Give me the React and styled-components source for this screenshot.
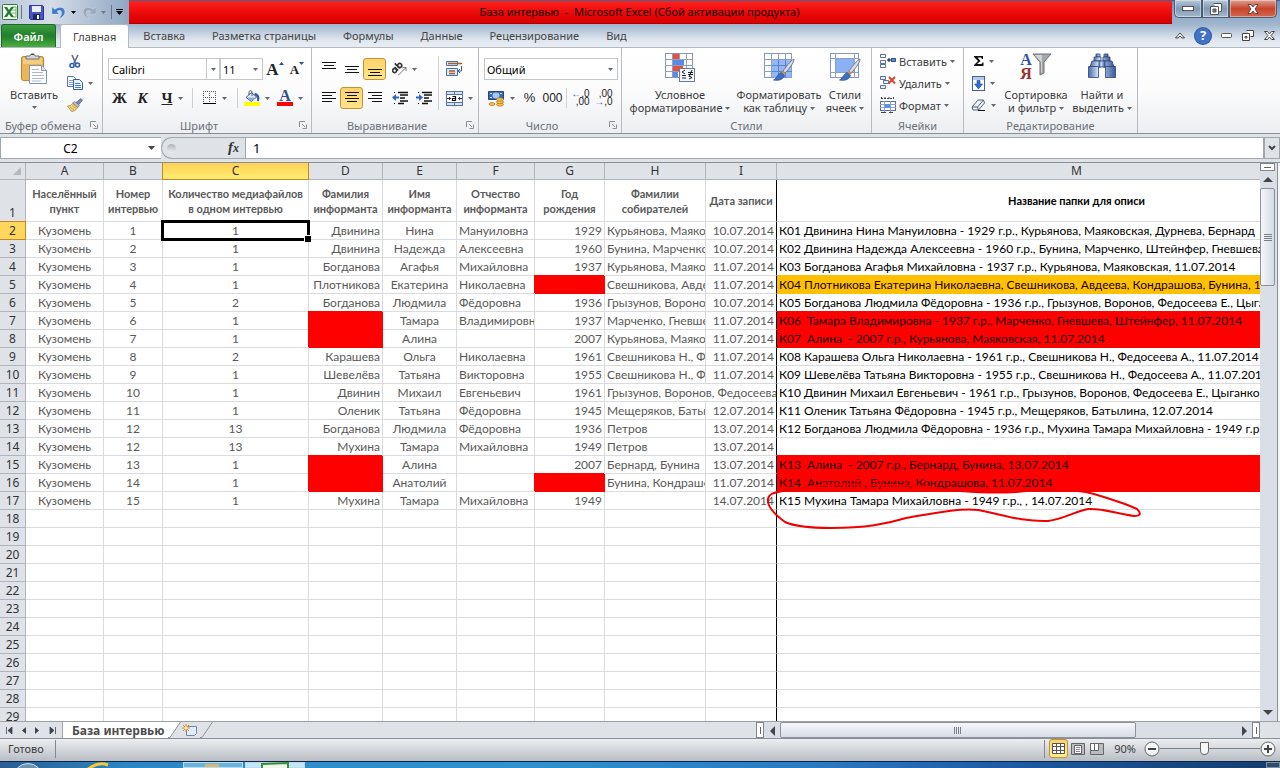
import React from "react";
import styled, { createGlobalStyle, css } from "styled-components";

const COLUMNS = [
  { id: "A", width: 78, align: "center", title: ["Населённый", "пункт"] },
  { id: "B", width: 59, align: "center", title: ["Номер", "интервью"] },
  { id: "C", width: 146, align: "center", title: ["Количество медиафайлов", "в одном интервью"] },
  { id: "D", width: 74, align: "right", title: ["Фамилия", "информанта"] },
  { id: "E", width: 74, align: "center", title: ["Имя", "информанта"] },
  { id: "F", width: 78, align: "left", title: ["Отчество", "информанта"] },
  { id: "G", width: 70, align: "right", title: ["Год", "рождения"] },
  { id: "H", width: 101, align: "left", title: ["Фамилии", "собирателей"] },
  { id: "I", width: 71, align: "right", title: ["Дата записи"] },
  { id: "M", width: 600, align: "left", title: ["Название папки для описи"] },
];

const RED = "#ff0000";
const ORANGE = "#ffc000";

const ROWS = [
  ["1", "1", "Двинина", "Нина", "Мануиловна", "1929", "Курьянова, Маяковская", "10.07.2014", "К01 Двинина Нина Мануиловна - 1929 г.р., Курьянова, Маяковская, Дурнева, Бернард"],
  ["2", "1", "Двинина", "Надежда", "Алексеевна", "1960", "Бунина, Марченко", "10.07.2014", "К02 Двинина Надежда Алексеевна - 1960 г.р., Бунина, Марченко, Штейнфер, Гневшева"],
  ["3", "1", "Богданова", "Агафья", "Михайловна", "1937", "Курьянова, Маяковская", "11.07.2014", "К03 Богданова Агафья Михайловна - 1937 г.р., Курьянова, Маяковская, 11.07.2014"],
  ["4", "1", "Плотникова", "Екатерина", "Николаевна", "", "Свешникова, Авдеева", "11.07.2014", "К04 Плотникова Екатерина Николаевна, Свешникова, Авдеева, Кондрашова, Бунина, 11.07.2014"],
  ["5", "2", "Богданова", "Людмила", "Фёдоровна", "1936", "Грызунов, Воронов", "10.07.2014", "К05 Богданова Людмила Фёдоровна - 1936 г.р., Грызунов, Воронов, Федосеева Е., Цыганков"],
  ["6", "1", "", "Тамара", "Владимировна", "1937", "Марченко, Гневшева", "11.07.2014", "К06  Тамара Владимировна - 1937 г.р., Марченко, Гневшева, Штейнфер, 11.07.2014"],
  ["7", "1", "", "Алина", "", "2007", "Курьянова, Маяковская", "11.07.2014", "К07  Алина  - 2007 г.р., Курьянова, Маяковская, 11.07.2014"],
  ["8", "2", "Карашева", "Ольга", "Николаевна", "1961", "Свешникова Н., Федосеева", "11.07.2014", "К08 Карашева Ольга Николаевна - 1961 г.р., Свешникова Н., Федосеева А., 11.07.2014"],
  ["9", "1", "Шевелёва", "Татьяна", "Викторовна", "1955", "Свешникова Н., Федосеева", "11.07.2014", "К09 Шевелёва Татьяна Викторовна - 1955 г.р., Свешникова Н., Федосеева А., 11.07.2014"],
  ["10", "1", "Двинин", "Михаил", "Евгеньевич", "1961", "Грызунов, Воронов, Федосеева", null, "К10 Двинин Михаил Евгеньевич - 1961 г.р., Грызунов, Воронов, Федосеева Е., Цыганков"],
  ["11", "1", "Оленик", "Татьяна", "Фёдоровна", "1945", "Мещеряков, Батылина", "12.07.2014", "К11 Оленик Татьяна Фёдоровна - 1945 г.р., Мещеряков, Батылина, 12.07.2014"],
  ["12", "13", "Богданова", "Людмила", "Фёдоровна", "1936", "Петров", "13.07.2014", "К12 Богданова Людмила Фёдоровна - 1936 г.р., Мухина Тамара Михайловна - 1949 г.р."],
  ["12", "13", "Мухина", "Тамара", "Михайловна", "1949", "Петров", "13.07.2014", ""],
  ["13", "1", "", "Алина", "", "2007", "Бернард, Бунина", "13.07.2014", "К13  Алина  - 2007 г.р., Бернард, Бунина, 13.07.2014"],
  ["14", "1", "", "Анатолий", "", "", "Бунина, Кондрашова", "11.07.2014", "К14  Анатолий , Бунина, Кондрашова, 11.07.2014"],
  ["15", "1", "Мухина", "Тамара", "Михайловна", "1949", "", "14.07.2014", "К15 Мухина Тамара Михайловна - 1949 г.р., , 14.07.2014"],
];

const FILLS = {
  G5: RED, M5: ORANGE, D7: RED, D8: RED, M7: RED, M8: RED,
  D15: RED, D16: RED, G16: RED, M15: RED, M16: RED,
};

const TABS = ["Вставка", "Разметка страницы", "Формулы", "Данные", "Рецензирование", "Вид"];
const EMPTY_ROWS = Array.from({ length: 12 }, (_, i) => i + 18);

/* ---------- icons ---------- */

const Svg = ({ w, h, children }) => (
  <svg width={w} height={h} viewBox={`0 0 ${w} ${h}`} fill="none" aria-hidden="true">
    {children}
  </svg>
);

const Caret = () => (
  <Svg w={5} h={3}>
    <path d="M0 0h5L2.5 3z" fill="#666" />
  </Svg>
);

const Lines = ({ rows, h = 14 }) => (
  <Svg w={14} h={h}>
    {rows.map(([x, y, w]) => (
      <path key={y} d={`M${x} ${y + 0.5}h${w}`} stroke="#111" />
    ))}
  </Svg>
);

const ExcelIcon = () => (
  <Svg w={16} h={16}>
    <rect x="0.5" y="0.5" width="15" height="15" rx="1" fill="#f6fbf4" stroke="#2c7a36" />
    <path d="M10 3h4v10h-4M10 6h4M10 9h4" stroke="#76b36e" />
    <path d="M2 3h3l2 3 2-3h3L8.500 8l3.500 5H9L7 10l-2 3H2l3.500-5z" fill="#1f7d30" />
  </Svg>
);

const SaveIcon = () => (
  <Svg w={15} h={15}>
    <path d="M.5.5h13l1 1v13H1.500l-1-1z" fill="#4a55c4" stroke="#2c3593" />
    <path d="M3 1h9v6H3z" fill="#e8eefb" />
    <path d="M4 9h7v6H4z" fill="#20285f" />
    <path d="M8 10h2v4H8z" fill="#fff" />
  </Svg>
);

const UndoIcon = ({ color = "#3f7ccb", flip }) => (
  <Svg w={14} h={13}>
    <g transform={flip ? "matrix(-1 0 0 1 14 0)" : undefined}>
      <path d="M0 1v7h7L4.800 5.600C7 3.700 9.500 4 9.700 6.500c.2 2.500-1 4-2.700 6 4-1.500 6-4 5.800-7C12.500 1 7 0 2.800 3.500z" fill={color} stroke="#fff" strokeOpacity=".4" strokeWidth=".5" />
    </g>
  </Svg>
);

const PasteIcon = () => (
  <Svg w={28} h={32}>
    <rect x="1.500" y="3.500" width="22" height="24" rx="2" fill="#ecb556" stroke="#b7832e" />
    <path d="M3 5h19v6H3z" fill="#f6cb7d" />
    <path d="M6 6V3h4c0-3 5-3 5 0h4v3z" fill="#d5d8de" stroke="#6b7078" />
    <path d="M11 1.500h3" stroke="#444" />
    <path d="M9.500 12.500h12l5 5v13h-17z" fill="#fff" stroke="#7f93b8" />
    <path d="M21.500 12.500v5h5" fill="#dfe7f5" stroke="#7f93b8" />
    <path d="M12 16.500h7M12 19.500h11M12 22.500h12M12 25.500h12M12 28h9" stroke="#a9b8d6" />
  </Svg>
);

const CutIcon = () => (
  <Svg w={12} h={15}>
    <path d="M3 1l4 9M9 1L4.500 10" stroke="#5e6b85" strokeWidth="1.600" />
    <circle cx="3" cy="11.500" r="2" stroke="#2d5fb3" strokeWidth="1.600" />
    <circle cx="8.500" cy="11" r="2" stroke="#2d5fb3" strokeWidth="1.600" />
  </Svg>
);

const CopyIcon = () => (
  <Svg w={16} h={14}>
    <path d="M.5.5h6l3 3v7h-9z" fill="#fff" stroke="#5476b4" />
    <path d="M2 4.500h5M2 6.500h4M2 8.500h4" stroke="#7fa0d4" />
    <path d="M6.500 3.500h6l3 3v7h-9z" fill="#e9f1fd" stroke="#3a5f9f" />
    <path d="M8 7.500h5M8 9.500h6M8 11.500h6" stroke="#4c7dc6" />
  </Svg>
);

const BrushIcon = () => (
  <Svg w={16} h={14}>
    <path d="M9 4.500L14 .5l1.500 1.500L12 6.500z" fill="#8088b4" stroke="#4d5689" strokeWidth=".7" />
    <path d="M7.500 3.500l5 4-1.500 2-5.500-4.500z" fill="#b8bcc6" stroke="#6b6f79" strokeWidth=".6" />
    <path d="M5.500 5.500l5 4C9 12 7 13.500 4.500 13.500L.5 8c2 .3 3.500-.8 5-2.500z" fill="#f1d67c" stroke="#a8843a" strokeWidth=".8" />
    <path d="M3 9l4 3M5 7.500l4 3" stroke="#b99545" strokeWidth=".7" />
  </Svg>
);

const BorderIcon = () => (
  <Svg w={14} h={14}>
    <path d="M.5 0v12M6.500 0v12M12.500 0v12M0 .5h13M0 6.500h13" stroke="#555" strokeDasharray="1 1" />
    <path d="M0 12.500h13" stroke="#000" />
  </Svg>
);

const BucketIcon = () => (
  <Svg w={16} h={16}>
    <path d="M7.500 2.500l5 4.500-5 4.500L2 7.500z" fill="#e6edf8" stroke="#4a6086" />
    <path d="M3 7.500h9l-4.500 3.500z" fill="#8eabd9" />
    <path d="M8 6V2.500c0-2.500-3-2.500-3 0V5" stroke="#43536e" />
    <path d="M11 3c4 .5 5 4 4 8-1.500.5-2 0-2-1 .5-3-.5-4-3-5z" fill="#2f5bad" />
    <path d="M0 12h16v4H0z" fill="#ffff00" />
  </Svg>
);

const OrientationIcon = () => (
  <Svg w={15} h={14}>
    <g transform="rotate(-45 7 7)" stroke="#333" strokeWidth="1.600">
      <circle cx="2.800" cy="5" r="2" />
      <path d="M5.300 2.500v5M8 0v7" />
      <circle cx="10" cy="5" r="2" />
    </g>
    <path d="M6 13.500l8-8M14 9V5.500h-3.500" stroke="#777" />
  </Svg>
);

const WrapIcon = () => (
  <Svg w={17} h={16}>
    <path d="M.5.500h11v4H.5zM.5 7.500h11v7H.5z" fill="#dce6f5" stroke="#4e6fa5" />
    <path d="M2 2.500h14M3 10h6M3 12.500h6" stroke="#a3612d" strokeWidth="1.400" />
    <path d="M15.500 5v5h-3M14 8l-2 2 2 2" stroke="#3a5b94" />
  </Svg>
);

const IndentIcon = ({ flip }) => (
  <Svg w={16} h={14}>
    <path d="M6 1.500h10M8 4h8M8 7h5M8 10h8M6 12.500h6" stroke="#111" strokeWidth="1.500" />
    <path d={flip ? "M0 5.500h3V3l4 3.500L3 10V7.500H0z" : "M7 5.500H4V3L0 6.500 4 10V7.500h3z"} fill="#2f67c9" />
    <path d="M2 1.500h2M2 12.500h2" stroke="#111" strokeDasharray="1 1" />
  </Svg>
);

const MergeIcon = () => (
  <Svg w={17} h={15}>
    <rect x=".5" y=".5" width="16" height="14" fill="#d5e1f4" stroke="#5774a8" />
    <path d="M0 3.500h17M0 11.500h17M8.500 0v3M8.500 12v3" stroke="#5774a8" />
    <path d="M1 4h15v7H1z" fill="#fff" />
    <path d="M1 7.500h4M12 7.500h4M3.500 6v3M13.500 6v3" stroke="#333" />
    <path d="M6.500 5.500h3v4h-3v-2h3" stroke="#111" strokeWidth="1.200" />
  </Svg>
);

const MoneyIcon = () => (
  <Svg w={17} h={17}>
    <path d="M.5 1.500h15v8H.5z" fill="#3c67b4" stroke="#20468a" />
    <ellipse cx="8" cy="5.500" rx="3.500" ry="3" fill="#a9c6f1" />
    <path d="M2 3.500h2M12 3.500h2M2 7.500h2" stroke="#cfe0fa" />
    <g fill="#f5c34f" stroke="#a7721a" strokeWidth=".7">
      <ellipse cx="4" cy="14" rx="3" ry="1.500" />
      <ellipse cx="12" cy="14.500" rx="3.500" ry="1.700" />
      <ellipse cx="12" cy="12" rx="3.500" ry="1.700" />
      <ellipse cx="12" cy="9.500" rx="3.500" ry="1.700" />
    </g>
  </Svg>
);

const TableGrid = () => (
  <>
    <rect x=".5" y=".5" width="27" height="24" fill="#fff" stroke="#8697b5" />
    <path d="M0 6.500h28M0 12.500h28M0 18.500h28M7.500 0v25M14.500 0v25M21.500 0v25" stroke="#8ba0c4" />
  </>
);

const StyleBrush = () => (
  <>
    <path d="M30 6c0 4-5 10-9 14l-2-2c3-4 7-10 11-12z" fill="#d7dbe2" stroke="#5c6470" strokeWidth=".8" />
    <path d="M19 18l3 2-2 2-3-2z" fill="#c79055" />
    <path d="M17 19.500l3.500 3C19 27 14 28 9.500 27c3-1 3-5 7.500-7.500z" fill="#3e70bf" stroke="#274f93" strokeWidth=".7" />
  </>
);

const CondIcon = () => (
  <Svg w={30} h={29}>
    <TableGrid />
    <path d="M8 1h6v5H8zM8 13h10v5H8z" fill="#ee4c3b" />
    <path d="M8 7h11v5H8zM8 19h5v5H8z" fill="#5b8ae6" />
    <rect x="14.500" y="15.500" width="15" height="13" fill="#f2f5fb" stroke="#6f7a8e" />
    <path d="M20 17l-3 2 3 2M17 22.500h4M17 25h4M23 19.500h5M23 21.500h5M27 17l-3 7M24 23l3 1.500-3 1.500" stroke="#222" />
  </Svg>
);

const FormatTableIcon = () => (
  <Svg w={31} h={29}>
    <TableGrid />
    <path d="M8 7h20v18H8z" fill="#7aa5f2" fillOpacity=".8" />
    <path d="M8 12.500h20M8 18.500h20M14.500 7v18M21.500 7v18" stroke="#5a84cc" />
    <StyleBrush />
  </Svg>
);

const CellStyleIcon = () => (
  <Svg w={31} h={29}>
    <rect x=".5" y=".5" width="28" height="24" fill="#fff" stroke="#8697b5" />
    <path d="M0 5.500h29M0 19.500h29M5.500 0v25M24.500 0v25" stroke="#8ba0c4" />
    <path d="M6 6h18v13H6z" fill="#8bb1f5" />
    <StyleBrush />
  </Svg>
);

const InsertCellIcon = () => (
  <Svg w={16} h={15}>
    <path d="M.5.500h5v3h-5zM.5 6.500h5v3h-5zM.5 10.500h5v3h-5z" fill="#fff" stroke="#5a6f96" />
    <path d="M11.500 4.500h4v3h-4z" fill="#5b92e8" stroke="#2a4c8d" />
    <path d="M7 6h4M9 4v4" stroke="#111" />
  </Svg>
);

const DeleteCellIcon = () => (
  <Svg w={16} h={14}>
    <path d="M.5.500h5v3h-5zM.5 9.500h5v3h-5zM3.500 4.500h5v3h-5z" fill="#e6edf9" stroke="#5a6f96" />
    <path d="M9 1l6 6.500M15 1L8.500 7.500" stroke="#e2412b" strokeWidth="2" />
  </Svg>
);

const FormatCellIcon = () => (
  <Svg w={16} h={16}>
    <path d="M1 1.500h13M1.500 0v3M13.500 0v3M5 0v2M9 0v2" stroke="#444" strokeDasharray="2 1" />
    <rect x=".5" y="4.500" width="15" height="9" fill="#fff" stroke="#5a6f96" />
    <path d="M0 7.500h16M0 10.500h16M4.500 4v11M10.500 4v11" stroke="#8ba0c4" />
    <path d="M5 7h5v4H5z" fill="#5b92e8" />
    <path d="M1 15.500h5M9 15.500h4" stroke="#444" />
  </Svg>
);

const SumIcon = () => (
  <Svg w={10} h={10}>
    <path d="M0 0h9v3H8L7 1.500H3.500L6.500 5 3 8h4.500L8.500 6.500H9.500V10H0V9l4-4-4-4z" fill="#111" />
  </Svg>
);

const FillIcon = () => (
  <Svg w={13} h={15}>
    <rect x=".5" y=".5" width="12" height="14" fill="#fff" stroke="#46629a" />
    <path d="M1 1h11v3H1z" fill="#b9c9e6" />
    <path d="M5 4.500h3V8h2.500l-4 5-4-5H5z" fill="#2f6bd6" stroke="#1f4a9c" strokeWidth=".6" />
  </Svg>
);

const EraserIcon = () => (
  <Svg w={15} h={12}>
    <path d="M1 8l6-7h5.500l1 3-6 7H2z" fill="#eef1f8" stroke="#56617c" />
    <path d="M1 8h5.500l6-7M6.500 8l1 3" stroke="#56617c" />
    <path d="M7 11.500h7" stroke="#111" />
  </Svg>
);

const FunnelIcon = () => (
  <Svg w={20} h={24}>
    <path d="M1 1h18l-7 8v11l-4 2V9z" fill="#a4a7ab" stroke="#6d7074" />
    <path d="M3 2h7v17l-1 1V9z" fill="#dcdde0" fillOpacity=".8" />
  </Svg>
);

const FindIcon = () => (
  <Svg w={28} h={26}>
    <defs>
      <linearGradient id="tube" x1="0" x2="1" y1="0" y2="0">
        <stop offset="0" stopColor="#4a6baa" />
        <stop offset=".35" stopColor="#d3e0f6" />
        <stop offset="1" stopColor="#3a5a9b" />
      </linearGradient>
    </defs>
    <g fill="url(#tube)" stroke="#2c4479" strokeWidth=".8">
      <path d="M8 1h4v3H8zM16 1h4v3h-4z" />
      <path d="M6 4h7v4H6zM15 4h7v4h-7z" />
      <path d="M4 8h9v6H2zM15 8h9l2 6H15z" />
      <path d="M11 8h6v6h-6z" />
      <path d="M.5 13.500h10v11H.5zM17.500 13.500h10v11h-10z" />
    </g>
  </Svg>
);

const LauncherIcon = () => (
  <Svg w={8} h={8}>
    <path d="M.5 6V.5H6M3 3l3 3M7.500 3.500v4h-4" stroke="#8b9097" />
  </Svg>
);

const NewSheetIcon = () => (
  <Svg w={16} h={13}>
    <path d="M4.500 2.500h10v7l-2 2h-8z" fill="#e4ecfb" stroke="#6f86b5" />
    <path d="M4 0v8M0 4h8M1 1l6 6M7 1L1 7" stroke="#d98e1b" />
    <circle cx="4" cy="4" r="1.500" fill="#fff3b0" />
  </Svg>
);

/* ---------- ribbon building blocks ---------- */

const Group = ({ label, width, launcher, children }) => (
  <RibbonGroup $width={width}>
    <GroupBody>{children}</GroupBody>
    <GroupFooter $launcher={launcher}>
      <span>{label}</span>
      {launcher && (
        <Launcher aria-label={label}>
          <LauncherIcon />
        </Launcher>
      )}
    </GroupFooter>
  </RibbonGroup>
);

const Big = ({ icon, lines, width }) => (
  <BigButton $width={width}>
    <BigIcon>{icon}</BigIcon>
    <span>{lines[0]}</span>
    <span>
      {lines[1]} <Caret />
    </span>
  </BigButton>
);

const Tool = ({ width = 23, active, label, caret, children }) => (
  <ToolButton $width={width} $active={active} aria-label={label}>
    {children}
    {caret && <Caret />}
  </ToolButton>
);

function Ribbon() {
  return (
    <RibbonBar>
      <Group label="Буфер обмена" width={103} launcher>
        <BigButton $width={64}>
          <BigIcon>
            <PasteIcon />
          </BigIcon>
          <span>Вставить</span>
          <PasteCaret><Caret /></PasteCaret>
        </BigButton>
        <ToolStack $width={32}>
          <Tool label="Вырезать" width={14}><CutIcon /></Tool>
          <Tool label="Копировать" width={24} caret><CopyIcon /></Tool>
          <Tool label="Формат по образцу" width={14}><BrushIcon /></Tool>
        </ToolStack>
      </Group>

      <Group label="Шрифт" width={209} launcher>
        <ToolRows>
          <ToolRow>
            <FontInput aria-label="Шрифт" defaultValue="Calibri" />
            <ComboButton aria-label="Список шрифтов"><Caret /></ComboButton>
            <SizeBox>
              <SizeInput aria-label="Размер шрифта" defaultValue="11" />
              <PlainCaret aria-label="Список размеров"><Caret /></PlainCaret>
            </SizeBox>
            <Tool label="Увеличить размер" width={24}><Serif $size={17}>A</Serif><Corner><Svg w={5} h={3}><path d="M0 3h5L2.500 0z" fill="#2a4f9a" /></Svg></Corner></Tool>
            <Tool label="Уменьшить размер" width={20}><Serif $size={13}>A</Serif><Corner><Svg w={5} h={3}><path d="M0 0h5L2.500 3z" fill="#2a4f9a" /></Svg></Corner></Tool>
          </ToolRow>
          <ToolRow>
            <Tool label="Полужирный"><Serif $size={15}>Ж</Serif></Tool>
            <Tool label="Курсив"><Serif $size={15} $italic>К</Serif></Tool>
            <Tool label="Подчёркнутый" width={36} caret><Serif $size={15} $underline>Ч</Serif></Tool>
            <Divider $height={20} />
            <Tool label="Границы" width={40} caret><BorderIcon /></Tool>
            <Divider $height={20} />
            <Tool label="Цвет заливки" width={34} caret><BucketIcon /></Tool>
            <Tool label="Цвет текста" width={32} caret><FontColor>A</FontColor></Tool>
          </ToolRow>
        </ToolRows>
      </Group>

      <Group label="Выравнивание" width={167} launcher>
        <ToolRows>
          <ToolRow>
            <Tool label="По верхнему краю"><Lines rows={[[0, 0, 14], [2, 3, 10], [0, 6, 14]]} /></Tool>
            <Tool label="Посередине"><Lines rows={[[0, 4, 14], [2, 7, 10], [0, 10, 14]]} /></Tool>
            <Tool label="По нижнему краю" active><Lines rows={[[0, 7, 14], [2, 10, 10], [0, 13, 14]]} /></Tool>
            <Tool label="Ориентация" width={36} caret><OrientationIcon /></Tool>
          </ToolRow>
          <ToolRow>
            <Tool label="По левому краю"><Lines rows={[[0, 1, 14], [0, 4, 10], [0, 7, 14], [0, 10, 10]]} /></Tool>
            <Tool label="По центру" active><Lines rows={[[0, 1, 14], [2, 4, 10], [0, 7, 14], [2, 10, 10]]} /></Tool>
            <Tool label="По правому краю"><Lines rows={[[0, 1, 14], [4, 4, 10], [0, 7, 14], [4, 10, 10]]} /></Tool>
            <Tool label="Уменьшить отступ" width={28}><IndentIcon /></Tool>
            <Tool label="Увеличить отступ" width={20}><IndentIcon flip /></Tool>
          </ToolRow>
        </ToolRows>
        <Divider $height={54} />
        <ToolRows $tight>
          <ToolRow><Tool label="Перенос текста" width={22}><WrapIcon /></Tool></ToolRow>
          <ToolRow><Tool label="Объединить" width={32} caret><MergeIcon /></Tool></ToolRow>
        </ToolRows>
      </Group>

      <Group label="Число" width={143} launcher>
        <ToolRows>
          <ToolRow>
            <FormatBox>
              <FormatSelect aria-label="Числовой формат" defaultValue="Общий">
                <option>Общий</option>
              </FormatSelect>
              <Caret />
            </FormatBox>
          </ToolRow>
          <ToolRow>
            <Tool label="Финансовый формат" width={34} caret><MoneyIcon /></Tool>
            <Tool label="Процентный формат"><Digits $size={13}>%</Digits></Tool>
            <Tool label="Формат с разделителями"><Digits $size={12} $narrow>000</Digits></Tool>
            <Divider $height={20} />
            <Tool label="Увеличить разрядность"><Digits $size={10} $narrow><b>←</b>,0<br />,00</Digits></Tool>
            <Tool label="Уменьшить разрядность"><Digits $size={10} $narrow>,00<br /><b>→</b>,0</Digits></Tool>
          </ToolRow>
        </ToolRows>
      </Group>

      <Group label="Стили" width={250}>
        <Big icon={<CondIcon />} lines={["Условное", "форматирование"]} width={112} />
        <Big icon={<FormatTableIcon />} lines={["Форматировать", "как таблицу"]} width={86} />
        <Big icon={<CellStyleIcon />} lines={["Стили", "ячеек"]} width={46} />
      </Group>

      <Group label="Ячейки" width={92}>
        <ToolStack $width={84}>
          <CellButton><InsertCellIcon />Вставить <Caret /></CellButton>
          <CellButton><DeleteCellIcon />Удалить <Caret /></CellButton>
          <CellButton><FormatCellIcon />Формат <Caret /></CellButton>
        </ToolStack>
      </Group>

      <Group label="Редактирование" width={174}>
        <ToolStack $width={36}>
          <Tool label="Сумма" width={32} caret><SumIcon /></Tool>
          <Tool label="Заполнить" width={30} caret><FillIcon /></Tool>
          <Tool label="Очистить" width={30} caret><EraserIcon /></Tool>
        </ToolStack>
        <Big icon={<SortArt><SortLetters><i>А</i><b>Я</b></SortLetters><FunnelIcon /></SortArt>} lines={["Сортировка", "и фильтр"]} width={68} />
        <Big icon={<FindIcon />} lines={["Найти и", "выделить"]} width={64} />
      </Group>
    </RibbonBar>
  );
}

/* ---------- worksheet ---------- */

function DataRow({ cells, number }) {
  const values = ["Кузомень", ...cells];
  return (
    <tr>
      <RowHead scope="row" $active={number === 2}>{number}</RowHead>
      {COLUMNS.map((col, i) => {
        const value = values[i];
        if (value === null) return null;
        const spills = values[i + 1] === null;
        return (
          <Cell
            key={col.id}
            colSpan={spills ? 2 : 1}
            $align={col.align}
            $dark={col.id === "M"}
            $frozen={col.id === "I" || spills}
            $fill={FILLS[col.id + number]}
            $selected={col.id === "C" && number === 2}
          >
            {value}
          </Cell>
        );
      })}
    </tr>
  );
}

function Sheet() {
  return (
    <SheetArea>
      <SheetView>
        <Table>
          <colgroup>
            <col style={{ width: 26 }} />
            {COLUMNS.map((c) => (
              <col key={c.id} style={{ width: c.width }} />
            ))}
          </colgroup>
          <thead>
            <tr>
              <SelectAll aria-label="Выделить всё">
                <Svg w={8} h={8}>
                  <path d="M8 0v8H0z" fill="#b5bac0" />
                </Svg>
              </SelectAll>
              {COLUMNS.map((c) => (
                <ColHead key={c.id} scope="col" $active={c.id === "C"}>{c.id}</ColHead>
              ))}
            </tr>
          </thead>
          <tbody>
            <tr>
              <RowHead scope="row" $tall>1</RowHead>
              {COLUMNS.map((c) => (
                <TitleCell key={c.id} $dark={c.id === "M"} $frozen={c.id === "I"}>
                  {c.title.map((line) => (
                    <div key={line}>{line}</div>
                  ))}
                </TitleCell>
              ))}
            </tr>
            {ROWS.map((cells, i) => (
              <DataRow key={i} cells={cells} number={i + 2} />
            ))}
            {EMPTY_ROWS.map((n) => (
              <tr key={n}>
                <RowHead scope="row">{n}</RowHead>
                {COLUMNS.map((c) => (
                  <Cell key={c.id} $frozen={c.id === "I"} />
                ))}
              </tr>
            ))}
          </tbody>
        </Table>
        <Scribble width="384" height="44" viewBox="0 0 384 44" fill="none" aria-hidden="true">
          <path
            d="M12 7C40 1 70-2 100 0C140-1 165 2 195 6C220 8 235 8 250 7C280 4 310 4 328 9C348 15 358 18 371 24C376 29 374 31 368 31C350 29 338 23 322 24C310 26 298 34 282 36C255 37 235 29 212 25C190 23 165 29 140 33C120 39 100 43 65 43C45 43 28 41 19 37C8 29 1 21 2 14C3 9 7 8 12 7"
            stroke="#f00000"
            strokeWidth="2"
          />
        </Scribble>
      </SheetView>
      <VScroll>
        <SplitHandle aria-label="Разделить окно"><i /></SplitHandle>
        <ScrollButton aria-label="Вверх">
          <Svg w={10} h={5}><path d="M0 5l5-5 5 5z" fill="#444" /></Svg>
        </ScrollButton>
        <VThumb><i /><i /><i /><i /></VThumb>
        <Spacer />
        <ScrollButton aria-label="Вниз">
          <Svg w={10} h={5}><path d="M0 0l5 5 5-5z" fill="#444" /></Svg>
        </ScrollButton>
      </VScroll>
      <WindowEdge />
    </SheetArea>
  );
}

export default function App() {
  return (
    <Window>
      <GlobalStyle />
      <TopArea>
        <TitleBar>
          <QuickAccess>
            <ExcelIcon />
            <QuickLine />
            <QuickButton aria-label="Сохранить" $width={28}><SaveIcon /></QuickButton>
            <QuickButton aria-label="Отменить" $width={32}><UndoIcon /><Svg w={5} h={3}><path d="M0 0h5L2.500 3z" fill="#000" /></Svg></QuickButton>
            <QuickButton aria-label="Вернуть" $width={32}><UndoIcon color="#9ba7b8" flip /><Svg w={5} h={3}><path d="M0 0h5L2.500 3z" fill="#777" /></Svg></QuickButton>
            <QuickLine />
            <QuickButton aria-label="Настройка панели" $width={14}><Svg w={7} h={6}><path d="M0 0h7v1H0zM0 2h7L3.500 6z" fill="#000" /></Svg></QuickButton>
          </QuickAccess>
          <Title>База интервью&nbsp; -&nbsp; Microsoft Excel (Сбой активации продукта)</Title>
          <WindowButtons>
            <WindowButton aria-label="Свернуть" $width={28}><Svg w={12} h={5}><rect x=".5" y=".5" width="11" height="4" fill="#fff" stroke="#555" /></Svg></WindowButton>
            <WindowButton aria-label="Восстановить" $width={27}><Svg w={12} h={12}><path d="M3.500.5h8v8h-2M.5 3.500h8v8h-8z" fill="#fff" stroke="#555" /><path d="M3 6h3v3H3z" fill="#777" stroke="#555" /></Svg></WindowButton>
            <WindowButton aria-label="Закрыть" $width={48} $close><Svg w={12} h={10}><path d="M1 .5h3l2 2.500 2-2.500h3L8 5l3 4.500H8L6 7 4 9.500H1L4 5z" fill="#fff" stroke="#4a2a2a" strokeWidth=".8" /></Svg></WindowButton>
          </WindowButtons>
        </TitleBar>
        <TabBar>
          <FileTab>Файл</FileTab>
          <RibbonTab $active>Главная</RibbonTab>
          {TABS.map((t) => (
            <RibbonTab key={t}>{t}</RibbonTab>
          ))}
          <Spacer />
          <TabTools>
            <IconButton aria-label="Свернуть ленту"><Svg w={10} h={7}><path d="M.5 6L5 1l4.500 5H7L5 4 3 6z" fill="#fff" stroke="#444" /></Svg></IconButton>
            <Help aria-label="Справка">?</Help>
            <IconButton aria-label="Свернуть книгу"><Svg w={11} h={5}><rect x=".5" y=".5" width="10" height="4" rx="1" fill="#fff" stroke="#555" /></Svg></IconButton>
            <IconButton aria-label="Восстановить книгу"><Svg w={12} h={11}><path d="M4.500.5h7v6h-3M.5 3.500h7v7h-7z" fill="#fff" stroke="#444" /><path d="M3 6.500h2v1.500H3z" stroke="#444" /></Svg></IconButton>
            <IconButton aria-label="Закрыть книгу"><Svg w={11} h={9}><path d="M.5.5h3l2 2.500 2-2.500h3L7 4.500l3.500 4h-3l-2-2.500-2 2.500h-3L4 4.500z" fill="#fff" stroke="#444" /></Svg></IconButton>
          </TabTools>
        </TabBar>
      </TopArea>

      <Ribbon />

      <FormulaBar>
        <NameBox>
          <NameInput aria-label="Имя ячейки" defaultValue="C2" />
          <PlainCaret aria-label="Список имён"><Svg w={7} h={4}><path d="M0 0h7L3.500 4z" fill="#444" /></Svg></PlainCaret>
        </NameBox>
        <FxArea>
          <Knob />
          <FxButton aria-label="Вставить функцию">f<small>x</small></FxButton>
        </FxArea>
        <FormulaInput aria-label="Строка формул" defaultValue="1" />
        <ExpandButton aria-label="Развернуть строку формул"><Svg w={8} h={6}><path d="M1 1l3 3 3-3" stroke="#444" strokeWidth="2" /></Svg></ExpandButton>
      </FormulaBar>

      <Sheet />

      <SheetBar>
        <SheetNav>
          <button aria-label="Первый лист"><Svg w={7} h={7}><path d="M.5 0v7M6 0v7L2 3.500z" fill="#3b4350" stroke="#3b4350" strokeWidth=".8" /></Svg></button>
          <button aria-label="Предыдущий лист"><Svg w={5} h={7}><path d="M4 0v7L0 3.500z" fill="#3b4350" /></Svg></button>
          <button aria-label="Следующий лист"><Svg w={5} h={7}><path d="M0 0v7l4-3.500z" fill="#3b4350" /></Svg></button>
          <button aria-label="Последний лист"><Svg w={7} h={7}><path d="M6.500 0v7M1 0v7l4-3.500z" fill="#3b4350" stroke="#3b4350" strokeWidth=".8" /></Svg></button>
        </SheetNav>
        <SheetTab>База интервью</SheetTab>
        <Slant><path d="M0 0h12L2 15.500H0z" fill="#fff" /><path d="M0 15.500h2L12.500 0" stroke="#8e949b" /></Slant>
        <NewSheet aria-label="Вставить лист"><NewSheetIcon /></NewSheet>
        <Slant><path d="M0 15.500h2L12.500 0" stroke="#8e949b" /></Slant>
        <Spacer />
        <HScroll>
          <SplitHandle $vertical aria-label="Ширина ярлыков"><i /></SplitHandle>
          <ScrollButton aria-label="Влево"><Svg w={5} h={10}><path d="M5 0v10L0 5z" fill="#444" /></Svg></ScrollButton>
          <HTrack>
            <HThumb><i /><i /><i /><i /></HThumb>
          </HTrack>
          <ScrollButton aria-label="Вправо"><Svg w={5} h={10}><path d="M0 0v10l5-5z" fill="#444" /></Svg></ScrollButton>
          <SplitHandle $vertical aria-label="Разделить окно по вертикали"><i /></SplitHandle>
        </HScroll>
      </SheetBar>

      <StatusBar>
        <StatusText>Готово</StatusText>
        <StatusLine />
        <Spacer />
        <StatusLine />
        <ViewButton aria-label="Обычный" $active><Svg w={13} h={11}><path d="M.5.500h12v10H.5zM0 3.500h13M0 7.500h13M4.500 0v11M8.500 0v11" fill="#fff" stroke="#555" /></Svg></ViewButton>
        <ViewButton aria-label="Разметка страницы"><Svg w={14} h={12}><path d="M.5.500h13v11H.5z" fill="#b9bdc3" stroke="#666" /><path d="M3.500 2.500h7v8h-7z" fill="#fff" stroke="#666" /><path d="M5 4.500h4M5 6.500h4M5 8.500h4" stroke="#888" /></Svg></ViewButton>
        <ViewButton aria-label="Страничный"><Svg w={14} h={12}><path d="M.5.500h13v11H.5z" fill="#b9bdc3" stroke="#666" /><path d="M.5.500h4v7h-4zM4.500.500h4v7h-4z" fill="#fff" stroke="#666" /></Svg></ViewButton>
        <ZoomLabel>90%</ZoomLabel>
        <RoundButton aria-label="Уменьшить"><Svg w={16} h={16}><circle cx="8" cy="8" r="7" fill="#f5f6f8" stroke="#666" /><path d="M4 8h8" stroke="#444" strokeWidth="2" /></Svg></RoundButton>
        <ZoomSlider type="range" aria-label="Масштаб" min="10" max="190" defaultValue="90" />
        <RoundButton aria-label="Увеличить"><Svg w={16} h={16}><circle cx="8" cy="8" r="7" fill="#f5f6f8" stroke="#666" /><path d="M4 8h8M8 4v8" stroke="#444" strokeWidth="2" /></Svg></RoundButton>
      </StatusBar>

      <Taskbar>
        <StartOrb />
        <Svg w={26} h={8}><path d="M1 8c6-5 14-8 21-5" stroke="#f5c83a" strokeWidth="3" /></Svg>
        <TaskButton $start><Svg w={16} h={4}><path d="M0 1h14v3H0z" fill="#d6b97a" /></Svg></TaskButton>
        <TaskButton $light><Svg w={28} h={6}><path d="M1 6V2l26-1v5" fill="#eef8ea" stroke="#3d8b3a" strokeWidth="2" /></Svg></TaskButton>
        <Spacer />
        <ShowDesktop aria-label="Свернуть все окна" />
      </Taskbar>
    </Window>
  );
}

/* ---------- styles ---------- */

const GlobalStyle = createGlobalStyle`
  * { box-sizing: border-box; }
  body {
    margin: 0;
    overflow: hidden;
    background: #fff;
  }
  button, input, select {
    font: inherit;
    color: inherit;
    border: 0;
    padding: 0;
    margin: 0;
    background: none;
    border-radius: 0;
    outline: none;
  }
  svg { display: block; flex: none; }
`;

const Window = styled.div`
  display: flex;
  flex-direction: column;
  height: 100vh;
  font-family: "Noto Sans", "Open Sans", sans-serif;
  font-size: 11px;
  line-height: 13px;
  color: #3b3b3b;
`;

const Spacer = styled.div`
  flex: 1;
`;

/* ---- title and tabs ---- */
const TopArea = styled.header`
  background: linear-gradient(180deg, #1c3a63 0, #6c8fb5 1px, #8ba7c6 12px, #9fb5cd 24px, #dfe6ee 40px, #e9eef2 47px);
  border-bottom: 1px solid #b3b9c0;
`;

const TitleBar = styled.div`
  display: flex;
  height: 24px;
`;

const QuickAccess = styled.div`
  display: flex;
  align-items: center;
  width: 129px;
  padding-left: 2px;
  background: linear-gradient(90deg, #b9c8d9, #d5dde8 40%, #8fa6c3);
`;

const QuickLine = styled.span`
  width: 1px;
  height: 14px;
  margin: 0 0 0 3px;
  background: #6b7788;
`;

const QuickButton = styled.button`
  display: flex;
  align-items: center;
  justify-content: center;
  gap: 5px;
  width: ${(p) => p.$width}px;
  height: 20px;
  margin-right: -2px;
`;

const Title = styled.div`
  flex: 1;
  margin-top: 1px;
  padding-right: 22px;
  background: linear-gradient(180deg, #ff2020, #e80808 60%, #d80000);
  border-bottom: 1px solid #b00000;
  color: #1c0000;
  text-align: center;
  line-height: 22px;
`;

const WindowButtons = styled.div`
  display: flex;
  width: 108px;
  padding: 0 3px 5px 2px;
`;

const WindowButton = styled.button`
  display: flex;
  align-items: center;
  justify-content: center;
  width: ${(p) => p.$width}px;
  height: 18px;
  border: 1px solid #4a5e78;
  border-top: 0;
  background: ${(p) => (p.$close ? "linear-gradient(180deg, #e0a196, #c7452c 50%, #d4654a)" : "linear-gradient(180deg, #b8c8da, #8299b3 50%, #a5b8cb)")};
  box-shadow: inset 0 0 0 1px rgba(255, 255, 255, 0.4);

  &:first-child { border-radius: 0 0 0 5px; }
  &:last-child { border-radius: 0 0 5px 0; }
`;

const TabBar = styled.nav`
  display: flex;
  align-items: flex-end;
  gap: 1px;
  height: 23px;
  padding-left: 1px;
`;

const FileTab = styled.button`
  width: 55px;
  height: 23px;
  margin-right: 3px;
  border: 1px solid #1c6a24;
  border-bottom: 0;
  border-radius: 3px 3px 0 0;
  background: linear-gradient(180deg, #3f9b3f, #1f7f2b 50%, #4cae3f);
  color: #fff;
  font-weight: 600;
`;

const RibbonTab = styled.button`
  height: 23px;
  padding: 0 13px;
  color: #444;

  ${(p) =>
    p.$active &&
    css`
      height: 24px;
      margin-bottom: -1px;
      padding: 0 12px;
      border: 1px solid #b3b9c0;
      border-bottom: 0;
      border-radius: 3px 3px 0 0;
      background: #fff;
    `}
`;

const TabTools = styled.div`
  display: flex;
  align-items: center;
  gap: 10px;
  height: 23px;
  padding-right: 5px;
`;

const IconButton = styled.button`
  display: flex;
`;

const Help = styled.button`
  width: 16px;
  height: 16px;
  border-radius: 50%;
  background: #3f73c8;
  box-shadow: 0 0 0 1px #2c559e;
  color: #fff;
  font-size: 13px;
  font-weight: bold;
`;

/* ---- ribbon ---- */
const RibbonBar = styled.section`
  display: flex;
  height: 86px;
  background: linear-gradient(180deg, #fff, #fcfcfd 50%, #eceef1);
  border-bottom: 1px solid #8b9097;
`;

const RibbonGroup = styled.div`
  display: flex;
  flex-direction: column;
  flex: none;
  width: ${(p) => p.$width}px;
  border-right: 1px solid #b8bcc2;
`;

const GroupBody = styled.div`
  display: flex;
  flex: 1;
  padding: 2px 0 0 2px;
`;

const GroupFooter = styled.div`
  display: flex;
  align-items: center;
  height: 16px;
  padding: 0 4px 0 ${(p) => (p.$launcher ? 0 : 4)}px;
  color: #6b7079;

  span {
    flex: 1;
    padding-right: ${(p) => (p.$launcher ? 4 : 0)}px;
    text-align: center;
    white-space: nowrap;
  }
`;

const Launcher = styled.button`
  display: flex;
`;

const BigButton = styled.button`
  display: flex;
  flex-direction: column;
  align-items: center;
  flex: none;
  width: ${(p) => p.$width}px;
  padding-top: 3px;
  white-space: nowrap;

  span svg {
    display: inline-block;
    vertical-align: 2px;
  }
`;

const BigIcon = styled.div`
  display: flex;
  justify-content: center;
  height: 35px;
`;

const PasteCaret = styled.div`
  padding-top: 5px;
`;

const ToolStack = styled.div`
  display: flex;
  flex-direction: column;
  align-items: flex-start;
  width: ${(p) => p.$width}px;
  padding: 0 0 0 2px;
`;

const ToolRows = styled.div`
  display: flex;
  flex-direction: column;
  gap: 7px;
  padding: 8px 0 0 ${(p) => (p.$tight ? 2 : 3)}px;
`;

const ToolRow = styled.div`
  display: flex;
  align-items: center;
  height: 22px;
`;

const ToolButton = styled.button`
  position: relative;
  display: flex;
  align-items: center;
  justify-content: center;
  gap: 5px;
  flex: none;
  width: ${(p) => p.$width}px;
  height: 22px;

  ${(p) =>
    p.$active &&
    css`
      border: 1px solid #c2923a;
      border-radius: 3px;
      background: linear-gradient(180deg, #fcd36b, #ffe58a);
    `}
`;

const Divider = styled.span`
  flex: none;
  width: 1px;
  height: ${(p) => p.$height}px;
  margin: ${(p) => (p.$height > 30 ? "6px 2px 0 4px" : "0 2px")};
  background: #cdd0d5;
`;

const boxed = css`
  height: 22px;
  border: 1px solid #c3c7cc;
  background: #fff;
  color: #000;
`;

const FontInput = styled.input`
  ${boxed}
  width: 99px;
  padding-left: 3px;
`;

const ComboButton = styled.button`
  ${boxed}
  display: flex;
  align-items: center;
  justify-content: center;
  width: 14px;
  margin-left: -1px;
`;

const SizeBox = styled.div`
  ${boxed}
  display: flex;
  width: 43px;
`;

const SizeInput = styled.input`
  width: 28px;
  padding-left: 2px;
`;

const PlainCaret = styled.button`
  display: flex;
  align-items: center;
  justify-content: center;
  width: 14px;
`;

const Serif = styled.span`
  font-family: "Liberation Serif", serif;
  font-size: ${(p) => p.$size}px;
  font-weight: bold;
  font-style: ${(p) => (p.$italic ? "italic" : "normal")};
  text-decoration: ${(p) => (p.$underline ? "underline" : "none")};
  color: #222;
`;

const Corner = styled.span`
  align-self: flex-start;
  margin: 4px 0 0 -5px;
`;

const FontColor = styled.span`
  width: 16px;
  border-bottom: 4px solid #ff0000;
  font-family: "Liberation Serif", serif;
  font-size: 16px;
  font-weight: bold;
  line-height: 12px;
  color: #2f4f8f;
`;

const FormatBox = styled.label`
  ${boxed}
  display: flex;
  align-items: center;
  width: 134px;
  padding-right: 4px;
`;

const FormatSelect = styled.select`
  flex: 1;
  appearance: none;
  padding-left: 2px;
`;

const Digits = styled.span`
  font-family: ${(p) => (p.$narrow ? '"Liberation Sans Narrow", ' : "")}"Liberation Sans", sans-serif;
  font-size: ${(p) => p.$size}px;
  line-height: 8px;
  text-align: right;
  white-space: nowrap;
  color: #222;

  b { color: #2f67c9; }
`;

const CellButton = styled.button`
  display: flex;
  align-items: center;
  gap: 3px;
  height: 22px;
  padding-left: 4px;
`;

const SortArt = styled.div`
  display: flex;
`;

const SortLetters = styled.span`
  display: flex;
  flex-direction: column;
  font-family: "Liberation Serif", serif;
  font-size: 16px;
  font-weight: bold;
  line-height: 14px;
  color: #9b2f2f;

  i {
    font-style: normal;
    color: #2f56a8;
  }
`;

/* ---- formula bar ---- */
const FormulaBar = styled.div`
  display: flex;
  height: 29px;
  padding: 3px 0;
  background: #dfe3e8;
  border-bottom: 1px solid #8b9097;
  font-size: 13px;
  color: #000;
`;

const NameBox = styled.div`
  display: flex;
  width: 161px;
  height: 22px;
  padding-right: 3px;
  border: 1px solid #a2a7ad;
  border-right: 0;
  background: #fff;
`;

const NameInput = styled.input`
  flex: 1;
  width: 100px;
  padding-right: 4px;
  text-align: center;
  font-size: 12px;
`;

const FxArea = styled.div`
  display: flex;
  align-items: center;
  justify-content: space-between;
  width: 84px;
  height: 22px;
  padding: 0 6px 0 5px;
  border: 1px solid #a2a7ad;
  border-right: 0;
  border-radius: 11px 0 0 11px;
  background: #dfe3e8;
`;

const Knob = styled.span`
  width: 9px;
  height: 9px;
  border-radius: 50%;
  background: linear-gradient(180deg, #aeb3b9, #eef0f3);
`;

const FxButton = styled.button`
  font-family: "Liberation Serif", serif;
  font-size: 15px;
  font-style: italic;
  font-weight: bold;
  color: #333;

  small { font-size: 12px; }
`;

const FormulaInput = styled.input`
  flex: 1;
  height: 22px;
  padding-left: 7px;
  border: 1px solid #a2a7ad;
  background: #fff;
`;

const ExpandButton = styled.button`
  display: flex;
  align-items: center;
  justify-content: center;
  width: 16px;
  height: 22px;
  border: 1px solid #a2a7ad;
`;

/* ---- worksheet ---- */
const SheetArea = styled.main`
  display: flex;
  flex: 1;
  min-height: 0;
`;

const SheetView = styled.div`
  position: relative;
  flex: 1;
  min-width: 0;
  overflow: hidden;
`;

const Table = styled.table`
  width: 1377px;
  table-layout: fixed;
  border-collapse: separate;
  border-spacing: 0;
  font-family: Lato, "Noto Sans", sans-serif;
  font-size: 12px;
  line-height: 17px;
  color: #595959;

  th, td {
    padding: 0;
    white-space: pre;
  }
`;

const heading = css`
  height: 18px;
  border-right: 1px solid #b1b5ba;
  border-bottom: 1px solid #b1b5ba;
  background: #dfe3e8;
  font-family: "Noto Sans", sans-serif;
  font-weight: normal;
  color: #333;
`;

const activeHeading = css`
  border-color: #c8871f;
  background: linear-gradient(180deg, #ffd056, #ffee72);
`;

const SelectAll = styled.td`
  ${heading}
  height: 17px;
  line-height: 16px;

  svg { margin-left: 13px; }
`;

const ColHead = styled.th`
  ${heading}
  height: 17px;
  line-height: 16px;
  ${(p) => p.$active && activeHeading}
  ${(p) => p.$active && "box-shadow: -1px 0 0 #c8871f;"}
`;

const RowHead = styled.th`
  ${heading}
  ${(p) => p.$tall && "height: 42px; vertical-align: bottom;"}
  ${(p) => p.$active && activeHeading}
  ${(p) => p.$active && "background: #ffd75f; box-shadow: 0 -1px 0 #c8871f;"}
`;

const Cell = styled.td`
  height: 18px;
  overflow: hidden;
  border-right: 1px solid ${(p) => (p.$frozen ? "#000" : "#d9dbde")};
  border-bottom: 1px solid #d9dbde;
  text-align: ${(p) => p.$align};

  && { padding: 0 2px; }

  ${(p) =>
    p.$dark &&
    css`
      color: #000;
    `}

  ${(p) =>
    p.$fill &&
    css`
      border-color: ${p.$fill};
      background: ${p.$fill};
      box-shadow: ${p.$dark ? "0" : "-1px"} -1px 0 ${p.$fill};
      color: #1a0000;
    `}

  ${(p) =>
    p.$selected &&
    css`
      position: relative;
      overflow: visible;

      &::before {
        content: "";
        position: absolute;
        inset: -2px;
        border: 3px solid #000;
      }

      &::after {
        content: "";
        position: absolute;
        right: -3px;
        bottom: -3px;
        width: 6px;
        height: 6px;
        border: solid #fff;
        border-width: 1px 0 0 1px;
        background: #000;
      }
    `}
`;

const TitleCell = styled.th`
  height: 42px;
  overflow: hidden;
  border-right: 1px solid ${(p) => (p.$frozen ? "#000" : "#d9dbde")};
  border-bottom: 1px solid #d9dbde;
  font-size: 11px;
  font-weight: bold;
  line-height: 15px;
  color: ${(p) => (p.$dark ? "#000" : "#595959")};
`;

const Scribble = styled.svg`
  position: absolute;
  left: 766px;
  top: 322px;
  overflow: visible;
`;

const VScroll = styled.div`
  display: flex;
  flex-direction: column;
  width: 16px;
  background: #dadee7;
`;

const HScroll = styled.div`
  display: flex;
  flex: 0 1 504px;
  background: #dadee7;
`;

const SplitHandle = styled.button`
  display: flex;
  align-items: center;
  justify-content: center;
  flex: none;
  width: ${(p) => (p.$vertical ? 8 : 15)}px;
  height: ${(p) => (p.$vertical ? 16 : 8)}px;
  border: 1px solid #81868d;
  background: #fff;

  i {
    width: ${(p) => (p.$vertical ? 1 : 7)}px;
    height: ${(p) => (p.$vertical ? 7 : 1)}px;
    background: #666;
  }
`;

const ScrollButton = styled.button`
  display: flex;
  align-items: center;
  justify-content: center;
  width: 16px;
  height: 17px;
`;

const VThumb = styled.div`
  display: flex;
  flex-direction: column;
  align-items: center;
  justify-content: center;
  gap: 1px;
  width: 15px;
  height: 98px;
  border: 1px solid #8d929a;
  border-radius: 2px;
  background: linear-gradient(90deg, #f5f7fa, #d5dae3);

  i {
    width: 8px;
    height: 1px;
    background: #7b8088;
  }
`;

const HTrack = styled.div`
  flex: 1;
`;

const HThumb = styled.div`
  display: flex;
  align-items: center;
  justify-content: center;
  gap: 1px;
  width: 78%;
  height: 16px;
  border: 1px solid #8d929a;
  border-radius: 2px;
  background: linear-gradient(180deg, #f5f7fa, #d9dde5);

  i {
    width: 1px;
    height: 7px;
    background: #7b8088;
  }
`;

const WindowEdge = styled.div`
  width: 4px;
  border-right: 2px solid #f4f5f7;
  background: linear-gradient(90deg, #dadee7 1px, #8b9097 1px);
`;

/* ---- sheet tabs ---- */
const SheetBar = styled.div`
  display: flex;
  height: 17px;
  padding-right: 20px;
  border-top: 1px solid #9da2a9;
  background: #dfe3e8;
`;

const SheetNav = styled.div`
  display: flex;
  align-items: center;
  justify-content: space-around;
  width: 63px;
  padding: 0 2px;
  border-right: 1px solid #9da2a9;

  button { display: flex; }
`;

const SheetTab = styled.button`
  padding: 0 4px 0 9px;
  background: #fff;
  font-size: 12px;
  font-weight: bold;
  line-height: 15px;
  color: #4d4d4d;
`;

const Slant = styled.svg.attrs({ width: 14, height: 16, viewBox: "0 0 14 16", fill: "none" })``;

const NewSheet = styled.button`
  display: flex;
  align-items: center;
  width: 18px;
`;

/* ---- status bar ---- */
const StatusBar = styled.footer`
  display: flex;
  align-items: center;
  height: 23px;
  padding: 0 4px 3px 0;
  border-top: 1px solid #8b9097;
  background: linear-gradient(180deg, #eceef1, #d3d6da 50%, #b9bdc3);
`;

const StatusText = styled.span`
  width: 55px;
  padding-left: 8px;
`;

const StatusLine = styled.span`
  width: 1px;
  height: 18px;
  margin-right: 4px;
  background: #83888f;
`;

const ViewButton = styled.button`
  display: flex;
  align-items: center;
  justify-content: center;
  width: 19px;
  height: 19px;

  ${(p) =>
    p.$active &&
    css`
      border: 1px solid #c2923a;
      border-radius: 3px;
      background: linear-gradient(180deg, #fcd36b, #ffee8a);
    `}
`;

const ZoomLabel = styled.span`
  margin: 0 8px;
`;

const RoundButton = styled.button`
  display: flex;
`;

const ZoomSlider = styled.input`
  appearance: none;
  width: 100px;
  height: 16px;
  background: linear-gradient(#7b8088, #7b8088) center / 100% 1px no-repeat;

  &::-webkit-slider-thumb {
    appearance: none;
    width: 9px;
    height: 13px;
    border: 1px solid #666;
    border-radius: 1px 1px 5px 5px;
    background: #f5f6f8;
  }
`;

/* ---- taskbar ---- */
const Taskbar = styled.div`
  display: flex;
  height: 7px;
  overflow: hidden;
  border-top: 1px solid #0d2748;
  background: linear-gradient(90deg, #2a5d93, #2c86c4 10%, #2f93cf 40%, #2a78bf 65%, #1d5ca5 78%, #153c6b);
`;

const StartOrb = styled.span`
  flex: none;
  width: 30px;
  height: 30px;
  margin: 1px 43px 0 13px;
  border: 1px solid #cfe2f2;
  border-radius: 50%;
  background: #6d93ae;
`;

const TaskButton = styled.button`
  display: flex;
  align-items: center;
  justify-content: center;
  flex: none;
  width: 60px;
  margin-left: ${(p) => (p.$start ? 71 : 2)}px;
  border: 1px solid #b8dcf2;
  background: ${(p) => (p.$light ? "#c5e6f5" : "#6db4dd")};
`;

const ShowDesktop = styled.button`
  width: 14px;
  border: 1px solid #7f93ab;
  background: #33496a;
`;
